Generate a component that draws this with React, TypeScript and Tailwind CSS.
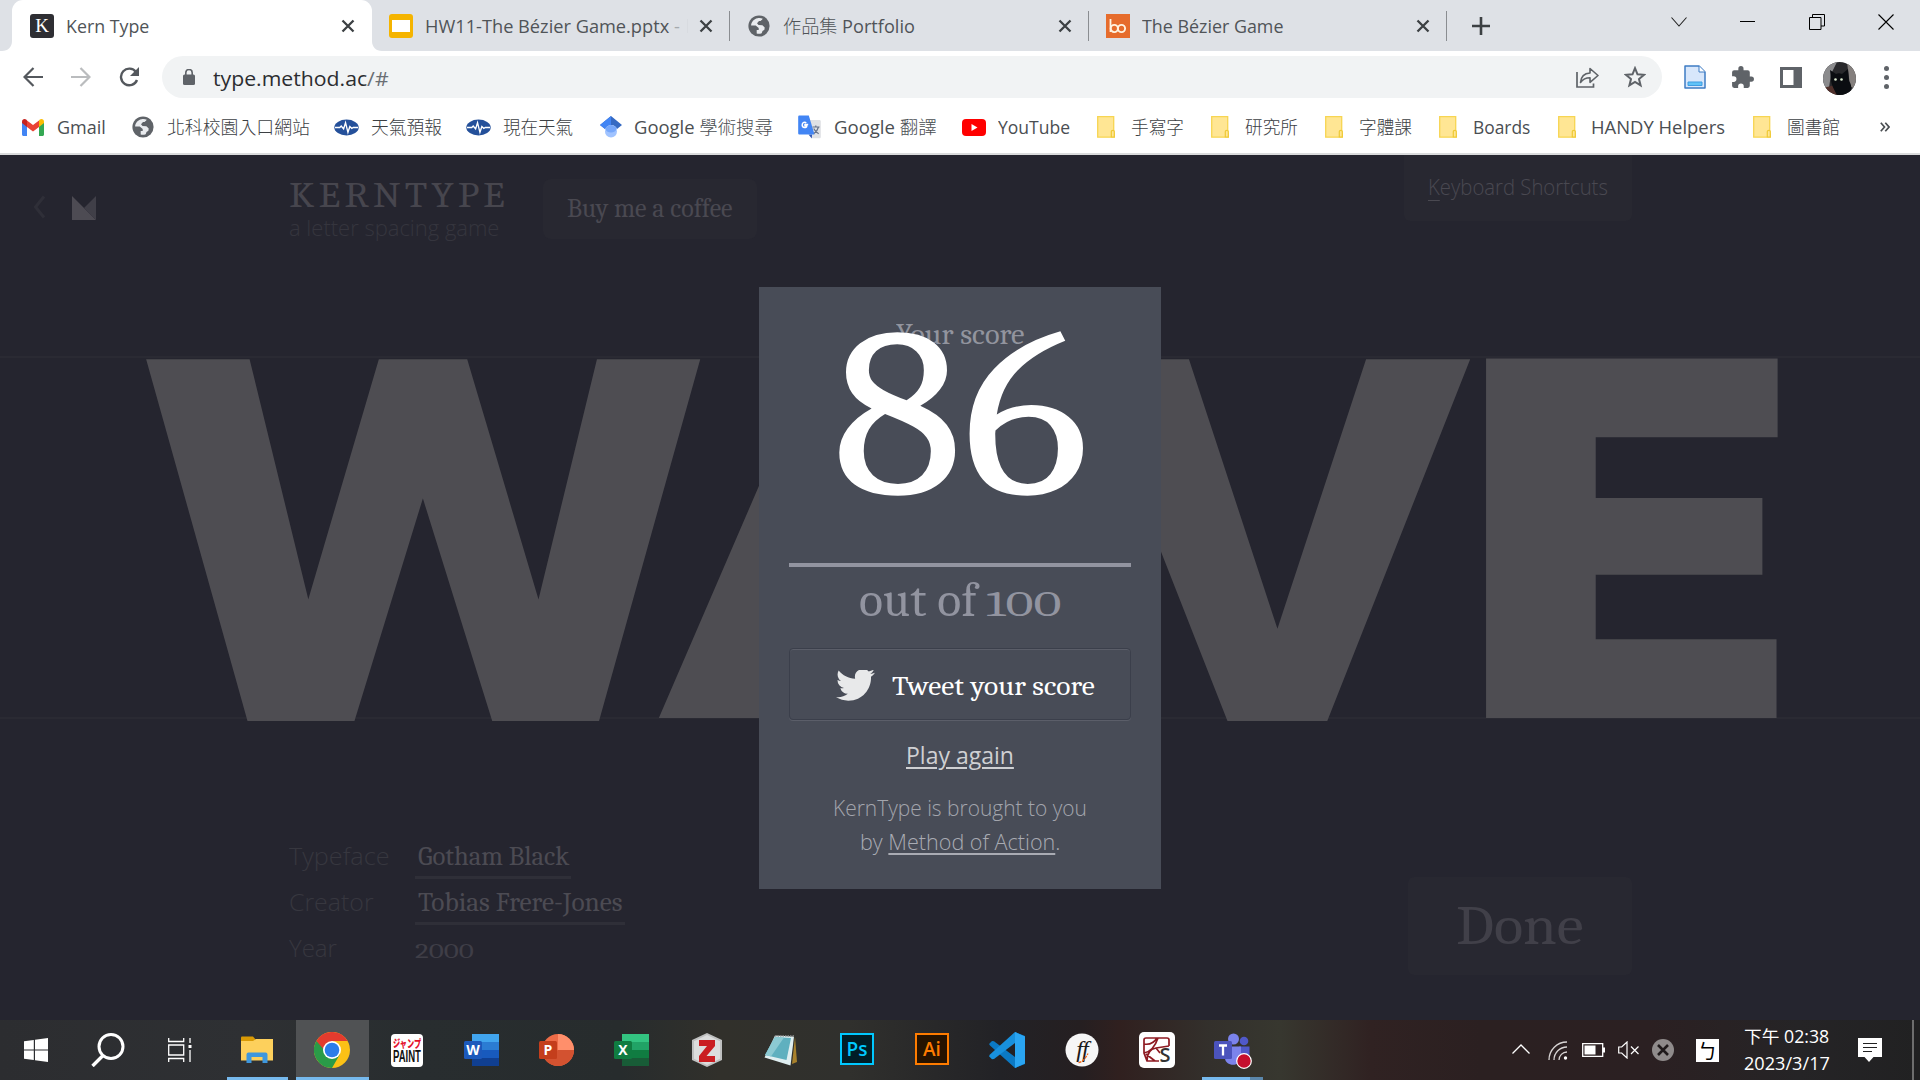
import { useLayoutEffect, useRef } from "react";
import type { ReactNode } from "react";

const UI = "font-['Open_Sans','Noto_Sans_CJK_TC',sans-serif]";
const SERIF = "font-serif";

/** One line of text, stretched horizontally to the width of its box. */
function Fit({ className, children }: { className: string; children: ReactNode }) {
  const box = useRef<HTMLSpanElement>(null);
  const inner = useRef<HTMLSpanElement>(null);
  useLayoutEffect(() => {
    const b = box.current;
    const i = inner.current;
    if (b && i && i.offsetWidth) i.style.transform = `scaleX(${b.clientWidth / i.offsetWidth})`;
  }, []);
  return (
    <span ref={box} className={`block shrink-0 whitespace-nowrap ${className}`}>
      <span ref={inner} className="inline-block origin-left">
        {children}
      </span>
    </span>
  );
}

/* ---------- browser icons ---------- */

function Globe({ className }: { className: string }) {
  return (
    <svg viewBox="0 0 22 22" className={`h-[22px] w-[22px] shrink-0 ${className}`}>
      <circle cx="11" cy="11" r="10.6" fill="#5f6368" />
      <path d="M9.5 3.2c-3.6.7-6.3 3.8-6.4 7.4h4.6l3 2.3v2l-2 .2v3.4c1.500.5 3.400.4 5-.3l.8-2.200 1.900-1.200.3-2.300-2.300-2.300-3.900-.2-1.500-1.700 2-2.200 2.600-.1 1.200-2.300C13.200 3 11.300 2.800 9.500 3.200z" fill="#e9ebee" />
      <path d="M13 5.500l-2.200 2.900 1 1.300h3.500l2.500 2.600 1-1.600c0-3-1.500-5.400-3.500-6.700z" fill="#5f6368" />
    </svg>
  );
}

function Cross({ className }: { className: string }) {
  return (
    <svg viewBox="0 0 14 14" className={`h-[14px] w-[14px] shrink-0 ${className}`}>
      <path d="M1.500 1.500l11 11M12.500 1.500l-11 11" stroke="#3c4043" strokeWidth="2.300" />
    </svg>
  );
}

function Folder({ className }: { className: string }) {
  return (
    <svg viewBox="0 0 18 22" className={`h-[22px] w-[18px] shrink-0 ${className}`}>
      <path d="M.7.7h16v16.500l.8 1v3H.7z" fill="#ffe694" stroke="#f7d552" strokeWidth="1.300" />
      <path d="M14.300 21v-5.500c0-1.500 3-1.500 3 0V21z" fill="#ffe694" stroke="#efc935" strokeWidth="1.200" />
    </svg>
  );
}

function Weather({ className }: { className: string }) {
  return (
    <svg viewBox="0 0 26 17" className={`h-[17px] w-[25px] shrink-0 ${className}`}>
      <ellipse cx="13" cy="8.500" rx="12.700" ry="8.200" fill="#24509a" />
      <path d="M1 8.500h5l1.500-1.500 2.500 3 2-6.500 2.500 10 2-6 2 2 1.500-1H25" fill="none" stroke="#fff" strokeWidth="1.400" />
    </svg>
  );
}

function Gmail({ className }: { className: string }) {
  return (
    <svg viewBox="0 0 22 17" className={`h-[17px] w-[22px] shrink-0 ${className}`}>
      <path d="M0 3v12.500C0 16.300.7 17 1.500 17H5V7z" fill="#4285f4" />
      <path d="M17 7v10h3.500c.8 0 1.500-.7 1.500-1.500V3z" fill="#34a853" />
      <path d="M17 1.500V8l5-4V2.500C22 .3 19.500-.7 17.800.6z" fill="#fbbc04" />
      <path d="M5 8V1.500L11 6l6-4.500V8l-6 4.500z" fill="#ea4335" />
      <path d="M0 2.500V4l5 4V1.500L4.200.6C2.500-.7 0 .3 0 2.500z" fill="#c5221f" />
    </svg>
  );
}

function Scholar({ className }: { className: string }) {
  return (
    <svg viewBox="0 0 22 22" className={`h-[22px] w-[22px] shrink-0 ${className}`}>
      <circle cx="11" cy="15.500" r="6" fill="#a0c3ff" />
      <path d="M11 0L0 9l5 4c1-2.500 3.300-4 6-4s5 1.500 6 4l5-4z" fill="#356ac3" />
      <path d="M11 0L0 9l5 4c1-2.500 3.300-4 6-4z" fill="#4285f4" />
      <path d="M5.200 12.500a6.500 6.500 0 0 1 11.600 0C16 15 14 16.500 11 16.500S6 15 5.200 12.500z" fill="#76a7fa" />
    </svg>
  );
}

function Translate({ className }: { className: string }) {
  return (
    <svg viewBox="0 0 23 24" className={`h-[24px] w-[23px] shrink-0 ${className}`}>
      <path d="M8 5h13.500c.8 0 1.300.6 1.300 1.300V22c0 .7-.5 1.300-1.300 1.300H14z" fill="#dfe1e5" />
      <path d="M14 19.500h-3.500l3.300 4z" fill="#3256b0" />
      <path d="M1.500.5h9.300L16.500 19.500h-15C.7 19.500.2 19 .2 18.200V1.800C.2 1 .7.500 1.500.5z" fill="#4285f4" />
      <path d="M14.500 12h7M17.800 10.500V12M20.500 12c-.8 3-2.500 5-4.500 6.500M15.700 13.500c1 2.200 2.800 4 5 5.200" stroke="#65728a" strokeWidth="1.200" fill="none" />
      <path d="M10.200 9.500H7v1.300h1.800c-.3 2.700-4.600 2.300-4.600-.8 0-2.800 2.700-3.500 4-2" stroke="#fff" strokeWidth="1.500" fill="none" />
    </svg>
  );
}

function YouTube({ className }: { className: string }) {
  return (
    <svg viewBox="0 0 24 17" className={`h-[17px] w-[24px] shrink-0 ${className}`}>
      <rect width="24" height="17" rx="4" fill="#f00" />
      <path d="M9.500 5v7l6-3.500z" fill="#fff" />
    </svg>
  );
}

function Marks() {
  const text = `${UI} text-[18px] leading-[28px] text-[#4a4e52]`;
  const cjk = `${UI} text-[18px] leading-[28px] text-[#3c4043] font-light`;
  return (
    <div className="flex h-[50px] items-center bg-white pb-[2px]">
      <Gmail className="ml-[22px]" />
      <Fit className={`ml-[13px] w-[49px] ${text}`}>Gmail</Fit>
      <Globe className="ml-[26px]" />
      <Fit className={`ml-[13px] w-[143px] ${cjk}`}>北科校園入口網站</Fit>
      <Weather className="ml-[24px]" />
      <Fit className={`ml-[12px] w-[71px] ${cjk}`}>天氣預報</Fit>
      <Weather className="ml-[24px]" />
      <Fit className={`ml-[12px] w-[70px] ${cjk}`}>現在天氣</Fit>
      <Scholar className="ml-[27px]" />
      <Fit className={`ml-[12px] w-[139px] ${text}`}>
        Google <span className="font-light">學術搜尋</span>
      </Fit>
      <Translate className="ml-[25px]" />
      <Fit className={`ml-[13px] w-[103px] ${text}`}>
        Google <span className="font-light">翻譯</span>
      </Fit>
      <YouTube className="ml-[25px]" />
      <Fit className={`ml-[12px] w-[72px] ${text}`}>YouTube</Fit>
      <Folder className="ml-[27px]" />
      <Fit className={`ml-[16px] w-[53px] ${cjk}`}>手寫字</Fit>
      <Folder className="ml-[27px]" />
      <Fit className={`ml-[16px] w-[53px] ${cjk}`}>研究所</Fit>
      <Folder className="ml-[27px]" />
      <Fit className={`ml-[16px] w-[53px] ${cjk}`}>字體課</Fit>
      <Folder className="ml-[27px]" />
      <Fit className={`ml-[16px] w-[57px] ${text}`}>Boards</Fit>
      <Folder className="ml-[28px]" />
      <Fit className={`ml-[15px] w-[134px] ${text}`}>HANDY Helpers</Fit>
      <Folder className="ml-[28px]" />
      <Fit className={`ml-[16px] w-[53px] ${cjk}`}>圖書館</Fit>
      <svg viewBox="0 0 10 10" className="ml-[40px] h-[10px] w-[10px] shrink-0">
        <path d="M.8.8L4.500 5 .8 9.200M5.300.8L9 5 5.300 9.200" fill="none" stroke="#4a4e52" strokeWidth="1.700" />
      </svg>
    </div>
  );
}

function TabStrip() {
  const label = `${UI} text-[18px] leading-[28px] text-[#505458]`;
  return (
    <div className="flex h-[51px] items-center bg-[#dee1e6]">
      <div className="relative ml-[12px] flex h-full w-[360px] shrink-0 items-center rounded-t-[11px] bg-white">
        <svg viewBox="0 0 10 10" className="absolute -left-[10px] bottom-0 h-[10px] w-[10px]">
          <path d="M10 0v10H0C6 10 10 6 10 0z" fill="#fff" />
        </svg>
        <svg viewBox="0 0 10 10" className="absolute -right-[10px] bottom-0 h-[10px] w-[10px]">
          <path d="M0 0v10h10C4 10 0 6 0 0z" fill="#fff" />
        </svg>
        <span className="ml-[18px] flex h-[24px] w-[24px] shrink-0 items-center justify-center rounded-[3px] bg-[#2e2e33] font-['Liberation_Serif',serif] text-[19px] leading-[24px] text-white">
          K
        </span>
        <Fit className={`ml-[12px] w-[83px] ${label}`}>Kern Type</Fit>
        <Cross className="ml-[192px]" />
      </div>
      <span className="ml-[17px] flex h-[24px] w-[24px] shrink-0 items-center justify-center rounded-[3px] bg-[#f5b400]">
        <span className="h-[12px] w-[18px] bg-white" />
      </span>
      <Fit className={`ml-[12px] w-[255px] ${label}`}>
        HW11-The Bézier Game.pptx <span className="text-[#a5a9ad]">-</span>
      </Fit>
      <span className="ml-[7px] h-[14px] w-[1px] shrink-0 bg-[#d8dbe0]" />
      <Cross className="ml-[11px]" />
      <span className="ml-[16px] h-[30px] w-[1px] shrink-0 bg-[#8a8d91]" />
      <Globe className="ml-[18px]" />
      <Fit className={`ml-[13px] w-[132px] ${label}`}>
        <span className="font-light">作品集</span> Portfolio
      </Fit>
      <Cross className="ml-[143px]" />
      <span className="ml-[16px] h-[30px] w-[1px] shrink-0 bg-[#8a8d91]" />
      <svg viewBox="0 0 24 24" className="ml-[17px] h-[24px] w-[24px] shrink-0">
        <path d="M0 0h24v24H0z" fill="#e66c2c" />
        <path d="M4.500 5v13" stroke="#fff3e0" strokeWidth="1.800" />
        <circle cx="8.300" cy="14.500" r="3.600" fill="none" stroke="#fff3e0" strokeWidth="1.900" />
        <circle cx="15.500" cy="14.500" r="3.600" fill="none" stroke="#fff3e0" strokeWidth="1.900" />
      </svg>
      <Fit className={`ml-[12px] w-[141px] ${label}`}>The Bézier Game</Fit>
      <Cross className="ml-[133px]" />
      <span className="ml-[16px] h-[30px] w-[1px] shrink-0 bg-[#8a8d91]" />
      <svg viewBox="0 0 18 18" className="ml-[25px] h-[18px] w-[18px] shrink-0">
        <path d="M9 0v18M0 9h18" stroke="#3c4043" strokeWidth="2.600" />
      </svg>
      <svg viewBox="0 0 16 10" className="mb-[8px] ml-[181px] h-[10px] w-[16px] shrink-0">
        <path d="M.5.5L8 9 15.500.5" fill="none" stroke="#222" strokeWidth="1.100" />
      </svg>
      <span className="mb-[8px] ml-[53px] h-[1px] w-[15px] shrink-0 bg-black" />
      <svg viewBox="0 0 16 16" className="mb-[8px] ml-[54px] h-[16px] w-[16px] shrink-0">
        <path d="M.5 3.500h11.500v12H.5zM3.500 3.500V.5h12v11.500H12" fill="none" stroke="#000" />
      </svg>
      <svg viewBox="0 0 16 16" className="mb-[8px] ml-[53px] h-[16px] w-[16px] shrink-0">
        <path d="M.5.5l15 15M15.500.5l-15 15" stroke="#000" strokeWidth="1.100" />
      </svg>
    </div>
  );
}

function Toolbar() {
  return (
    <div className="flex h-[52px] items-center bg-white">
      <svg viewBox="0 0 20 20" className="ml-[23px] h-[20px] w-[20px] shrink-0">
        <path d="M20 10H2M10.500 1L1.500 10l9 9" fill="none" stroke="#54585d" strokeWidth="2.200" />
      </svg>
      <svg viewBox="0 0 20 20" className="ml-[28px] h-[20px] w-[20px] shrink-0">
        <path d="M0 10h18M9.500 1l9 9-9 9" fill="none" stroke="#babcbe" strokeWidth="2.200" />
      </svg>
      <svg viewBox="0 0 22 20" className="ml-[28px] h-[20px] w-[22px] shrink-0">
        <path d="M17 5A8.300 8.300 0 1 0 18 13" fill="none" stroke="#54585d" strokeWidth="2.400" />
        <path d="M20 0v9h-9z" fill="#54585d" />
      </svg>
      <div className="ml-[21px] flex h-[42px] w-[1500px] shrink-0 items-center rounded-full bg-[#f1f3f4]">
        <svg viewBox="0 0 12 16" className="ml-[21px] h-[16px] w-[12px] shrink-0">
          <rect y="5.500" width="12" height="10.500" rx="1.500" fill="#5f6368" />
          <path d="M2.800 6V3.700a3.200 3.200 0 0 1 6.400 0V6" fill="none" stroke="#5f6368" strokeWidth="1.600" />
        </svg>
        <Fit className={`${UI} ml-[18px] mt-[2px] w-[176px] text-[20.500px] leading-[30px] text-[#2c2d30]`}>
          type.method.ac<span className="text-[#6a6e73]">/#</span>
        </Fit>
        <svg viewBox="0 0 23 21" className="ml-[1187px] h-[21px] w-[23px] shrink-0">
          <path d="M1 5v15h16.500v-3.500" fill="none" stroke="#5f6368" strokeWidth="1.700" />
          <path d="M4.500 15.500C5 9.500 9 6.300 14 6V1.500l8 7-8 6.800v-4.500c-4 0-7 1.300-9.500 4.700z" fill="none" stroke="#5f6368" strokeWidth="1.600" strokeLinejoin="round" />
        </svg>
        <svg viewBox="0 0 22 22" className="ml-[25px] h-[22px] w-[22px] shrink-0">
          <path d="M11 2.200l2.500 6.100 6.500.5-5 4.200 1.600 6.400L11 16l-5.600 3.400L7 13 2 8.800l6.500-.5z" fill="none" stroke="#5f6368" strokeWidth="2" />
        </svg>
      </div>
      <svg viewBox="0 0 22 24" className="ml-[22px] h-[24px] w-[22px] shrink-0">
        <path d="M1 1h14l6 6v16H1z" fill="#d8e7fb" stroke="#3e7cc4" strokeWidth="1.500" strokeLinejoin="round" />
        <path d="M15 1v6h6" fill="#fff" stroke="#3e7cc4" />
        <path d="M4 17h14v3.500H4z" fill="#5fc3f8" stroke="#3f9be0" />
      </svg>
      <svg viewBox="0 0 24 24" className="ml-[24px] h-[25px] w-[25px] shrink-0">
        <path d="M20.500 11H19V7a2 2 0 0 0-2-2h-4V3.500a2.500 2.500 0 0 0-5 0V5H4a2 2 0 0 0-2 2v3.800h1.500a2.700 2.700 0 0 1 0 5.400H2V20a2 2 0 0 0 2 2h3.800v-1.500a2.700 2.700 0 0 1 5.400 0V22H17a2 2 0 0 0 2-2v-4h1.500a2.500 2.500 0 0 0 0-5z" fill="#5f6368" />
      </svg>
      <svg viewBox="0 0 22 21" className="ml-[25px] h-[21px] w-[22px] shrink-0">
        <path d="M0 0h22v21H0z" fill="#5f6368" />
        <path d="M3 3h10.500v15H3z" fill="#fff" />
      </svg>
      <svg viewBox="0 0 33 33" className="ml-[21px] mt-[2px] h-[33px] w-[33px] shrink-0 overflow-hidden rounded-full">
        <path d="M0 0h33v33H0z" fill="#29292c" />
        <path d="M0 0h14L8 12 6 26 0 28z" fill="#8b8b8d" />
        <path d="M24 0h9v28l-6-4z" fill="#85807e" />
        <path d="M0 26l12-3 4 10H0z" fill="#50302b" />
        <path d="M7 8l6 4c2-1 4-1 6 0l6-5 1 12c4 5 2 12-2 14H14C12 29 8 23 8 17z" fill="#0b0d11" />
        <circle cx="12.500" cy="17.500" r="1.300" fill="#dcebd0" />
        <circle cx="18.500" cy="17.500" r="1.300" fill="#dcebd0" />
      </svg>
      <span className="ml-[28px] flex flex-col gap-[4px]">
        <span className="h-[5px] w-[5px] rounded-full bg-[#5f6368]" />
        <span className="h-[5px] w-[5px] rounded-full bg-[#5f6368]" />
        <span className="h-[5px] w-[5px] rounded-full bg-[#5f6368]" />
      </span>
    </div>
  );
}

/* ---------- game page ---------- */

function Header() {
  return (
    <div className="flex h-[110px] items-start">
      <svg viewBox="0 0 12 24" className="ml-[33px] mt-[40px] h-[24px] w-[12px] shrink-0">
        <path d="M11 1.500L2.500 12 11 22.500" fill="none" stroke="#2f2f38" strokeWidth="3" />
      </svg>
      <svg viewBox="0 0 24 24" className="ml-[27px] mt-[41px] h-[24px] w-[24px] shrink-0">
        <path d="M0 0l12 12L24 24H0z" fill="#4d4b53" />
        <path d="M24 0v24L12 12z" fill="#403f48" />
      </svg>
      <div className="ml-[193px] mt-[18px] w-[217px] shrink-0">
        <Fit className={`${SERIF} w-[220px] text-[36px] leading-[45px] tracking-[3.500px] text-[#47464e]`}>KERNTYPE</Fit>
        <Fit className="-mt-[6px] w-[210px] font-['Open_Sans',sans-serif] text-[22.500px] font-light leading-[32px] text-[#35353e]">
          a letter spacing game
        </Fit>
      </div>
      <div className="ml-[37px] mt-[24px] flex h-[60px] w-[214px] shrink-0 justify-center rounded-[8px] bg-[#282831]">
        <Fit className={`${SERIF} w-[166px] text-[26px] leading-[60px] text-[#4a4951]`}>Buy me a coffee</Fit>
      </div>
      <div className="ml-[647px] flex h-[66px] w-[228px] shrink-0 justify-center rounded-b-[6px] bg-[#282831]">
        <Fit className="w-[180px] font-['Open_Sans',sans-serif] text-[22px] font-light leading-[63px] text-[#4a4951]">
          <span className="underline decoration-1 underline-offset-[5px]">K</span>eyboard Shortcuts
        </Fit>
      </div>
    </div>
  );
}

function Board() {
  const letter = "absolute font-['Roboto',sans-serif] text-[#4e4d52]";
  return (
    <div className="relative h-[363px] border-y-[2px] border-[#2a2a33]">
      <Fit className={`${letter} -top-[65px] left-[137px] w-[573px] text-[509px] font-extrabold leading-[508px]`}>W</Fit>
      <Fit className={`${letter} -top-[66px] left-[660px] w-[405px] text-[506px] font-black leading-[508px]`}>A</Fit>
      <Fit className={`${letter} -top-[65px] left-[1085px] w-[386px] text-[509px] font-extrabold leading-[508px]`}>V</Fit>
      <Fit className="absolute -top-[67px] left-[1460px] w-[341px] font-['Inter',sans-serif] text-[494px] font-black leading-[494px] text-[#4e4d52]">
        E
      </Fit>
    </div>
  );
}

function Details() {
  const name = "font-['Open_Sans',sans-serif] text-[24px] font-light leading-[46px] text-[#37373f]";
  const value = "mt-[1px] font-serif text-[26px] leading-[46px] text-[#4c4b53]";
  return (
    <div className="ml-[289px] mt-[114px] flex w-[1343px] items-start justify-between">
      <div className="grid grid-cols-[126px_auto]">
        <Fit className={`${name} w-[101px]`}>Typeface</Fit>
        <div className="flex h-[46px] w-[156px] justify-center border-b-[3px] border-[#2f2f38]">
          <Fit className={`${value} w-[151px]`}>Gotham Black</Fit>
        </div>
        <Fit className={`${name} w-[85px]`}>Creator</Fit>
        <div className="flex h-[46px] w-[210px] justify-center border-b-[3px] border-[#2f2f38]">
          <Fit className={`${value} w-[205px]`}>Tobias Frere-Jones</Fit>
        </div>
        <Fit className={`${name} w-[48px]`}>Year</Fit>
        <Fit className="mt-[2px] w-[58px] font-serif text-[21px] leading-[48px] text-[#3f3e47]">2000</Fit>
      </div>
      <div className="mt-[44px] flex h-[98px] w-[224px] justify-center rounded-[6px] bg-[#282831]">
        <Fit className={`${SERIF} w-[128px] text-[54px] leading-[99px] text-[#414049]`}>Done</Fit>
      </div>
    </div>
  );
}

function ScoreCard() {
  return (
    <div className="absolute left-[759px] top-[132px] flex h-[602px] w-[402px] flex-col items-center bg-[#484c57]">
      <Fit className={`${SERIF} mt-[30px] w-[128px] text-[28.500px] leading-[36px] text-[#92949e]`}>Your score</Fit>
      <Fit className={`${SERIF} relative -mt-[35px] w-[257px] text-[241px] leading-[196px] text-white`}>86</Fit>
      <div className="mt-[49px] h-[4px] w-[342px] shrink-0 bg-[#9294a0]" />
      <div className={`${SERIF} mt-[5px] flex h-[57px] items-baseline text-[#9294a0]`}>
        <Fit className="w-[118px] text-[49px] leading-[57px]">out of</Fit>
        <Fit className="ml-[9px] w-[75px] text-[36px] leading-[57px]">100</Fit>
      </div>
      <div className="mt-[19px] flex h-[72px] w-[342px] shrink-0 items-center rounded-[4px] border border-[#3b3f4b] pt-[3px] shadow-[inset_0_1px_0_#5b5e69,0_1px_0_#5b5e69]">
        <svg viewBox="0 3 24 19.500" className="ml-[46px] h-[32px] w-[39px] shrink-0">
          <path
            d="M23.950 4.570a10 10 0 0 1-2.820.77 4.960 4.960 0 0 0 2.160-2.720c-.95.56-2 .96-3.130 1.190a4.920 4.920 0 0 0-8.380 4.480C7.690 8.090 4.070 6.130 1.640 3.160a4.820 4.820 0 0 0-.67 2.480c0 1.710.87 3.210 2.190 4.100a4.900 4.900 0 0 1-2.230-.62v.06a4.920 4.920 0 0 0 3.950 4.830 5 5 0 0 1-2.210.08 4.940 4.940 0 0 0 4.600 3.420A9.870 9.870 0 0 1 0 19.540a13.940 13.940 0 0 0 7.550 2.210c9.050 0 14-7.500 14-13.990 0-.21 0-.42-.02-.63a9.940 9.940 0 0 0 2.460-2.550z"
            fill="#e8e9ea"
          />
        </svg>
        <Fit className={`${SERIF} ml-[17px] w-[203px] text-[28px] leading-[40px] text-white`}>Tweet your score</Fit>
      </div>
      <Fit className="mt-[18px] w-[108px] font-['Open_Sans',sans-serif] text-[23px] leading-[35px] text-[#cfd0d3]">
        <span className="underline decoration-2 underline-offset-[3px]">Play again</span>
      </Fit>
      <Fit className="mt-[17px] w-[254px] font-['Open_Sans',sans-serif] text-[22px] font-light leading-[34px] text-[#a3a5ad]">
        KernType is brought to you
      </Fit>
      <Fit className="w-[200px] font-['Open_Sans',sans-serif] text-[22px] font-light leading-[34px] text-[#a9abb3]">
        by <span className="underline decoration-2 underline-offset-[3px]">Method of Action</span>.
      </Fit>
    </div>
  );
}

/* ---------- taskbar ---------- */

function Office({ letter, tone, className }: { letter: string; tone: [string, string, string, string, string]; className: string }) {
  const round = letter === "P";
  return (
    <svg viewBox="0 0 36 34" className={`h-[34px] w-[36px] shrink-0 ${className}`}>
      {round ? (
        <g>
          <circle cx="19" cy="17" r="16" fill={tone[1]} />
          <path d="M19 1a16 16 0 0 1 16 16H19z" fill={tone[0]} />
          <path d="M35 17a16 16 0 0 1-30 7.700L19 17z" fill={tone[2]} />
        </g>
      ) : (
        <g>
          <rect x="8" y="1" width="27" height="32" rx="1.500" fill={tone[1]} />
          <path d="M8 1h27v8H8z" fill={tone[0]} />
          <path d="M8 17h27v8H8z" fill={tone[2]} />
          <path d="M8 25h27v8H8z" fill={tone[3]} />
        </g>
      )}
      <rect x="0" y="8" width="18" height="18" rx="1.500" fill={tone[4]} />
      <text x="9" y="22" textAnchor="middle" fontSize="14" fontWeight="700" fill="#fff" fontFamily="Open Sans, sans-serif">
        {letter}
      </text>
    </svg>
  );
}

function Taskbar() {
  return (
    <div className="flex h-[60px] items-center bg-[linear-gradient(90deg,#2c2d30_0px,#2e3033_250px,#282d2f_420px,#272c2d_620px,#31302b_720px,#30302d_850px,#222226_1000px,#251f21_1080px,#30201f_1120px,#33302c_1210px,#37372f_1280px,#302222_1370px,#2b2021_1480px,#2b2022_1650px,#252426_1800px,#212122_1920px)]">
      <svg viewBox="0 0 24 24" className="ml-[24px] h-[24px] w-[24px] shrink-0">
        <path d="M0 3.300L9.800 2v9.500H0zM11 1.800L24 0v11.500H11zM0 12.500h9.800V22L0 20.700zM11 12.500h13V24l-13-1.800z" fill="#fff" />
      </svg>
      <svg viewBox="0 0 34 34" className="ml-[43px] h-[34px] w-[34px] shrink-0">
        <circle cx="20" cy="13.500" r="12" fill="none" stroke="#fff" strokeWidth="3" />
        <path d="M12 22.500L1.500 33" stroke="#fff" strokeWidth="3.400" />
      </svg>
      <svg viewBox="0 0 24 24" className="ml-[43px] h-[24px] w-[24px] shrink-0">
        <path d="M.7 0v3.500h15V0M.7 7h15v10h-15zM.7 24v-3.500h15V24M22 0v5M22 12v12" fill="none" stroke="#fff" strokeWidth="1.300" />
        <path d="M20.500 7h3v3h-3z" fill="#fff" />
      </svg>
      <div className="ml-[35px] flex h-full w-[61px] shrink-0 flex-col items-center border-b-[3px] border-[#76b9ed]">
        <svg viewBox="0 0 32 27" className="mt-[16px] mr-[2px] h-[27px] w-[32px]">
          <path d="M0 1.500Q0 .5 1 .5h11l3 3.500-3 3H0z" fill="#d99a05" />
          <path d="M0 5h12l3-2h17v21.500H0z" fill="#fdd05c" />
          <path d="M5.500 27V18.500q0-2 2-2h17q2 0 2 2V27h-5v-6h-11v6z" fill="#3e97dd" />
        </svg>
      </div>
      <div className="ml-[8px] flex h-full w-[73px] shrink-0 flex-col items-center border-b-[3px] border-[#76b9ed] bg-[#505254]">
        <svg viewBox="0 0 36 36" className="mt-[12px] mr-[2px] h-[36px] w-[36px]">
          <circle cx="18" cy="18" r="18" fill="#fbc116" />
          <path d="M18 18L2.400 9A18 18 0 0 0 18 36l7.800-13.500z" fill="#2a9b48" />
          <path d="M18 18h-7.800L2.400 9A18 18 0 0 1 33.600 9H18z" fill="#e33b2e" />
          <circle cx="18" cy="18" r="9" fill="#fff" />
          <circle cx="18" cy="18" r="7.300" fill="#2b7de9" />
        </svg>
      </div>
      <div className="ml-[22px] flex h-[33px] w-[32px] shrink-0 flex-col items-center overflow-hidden rounded-[4px] bg-white">
        <Fit className="mt-[4px] w-[28px] font-['Noto_Sans_CJK_JP',sans-serif] text-[11px] font-black leading-[11px] text-[#e4112c]">ジャンプ</Fit>
        <Fit className="w-[28px] font-['Liberation_Sans',sans-serif] text-[16px] font-bold leading-[15px] text-[#111]">PAINT</Fit>
      </div>
      <Office className="ml-[41px]" letter="W" tone={["#41a5ee", "#2b7cd3", "#185abd", "#103f91", "#1c59bb"]} />
      <Office className="ml-[39px]" letter="P" tone={["#ff8f6b", "#ed6c47", "#d35230", "#d35230", "#c43e1c"]} />
      <Office className="ml-[39px]" letter="X" tone={["#33c481", "#21a366", "#107c41", "#185c37", "#107c41"]} />
      <svg viewBox="0 0 30 34" className="ml-[42px] h-[34px] w-[30px] shrink-0">
        <path d="M15 0l15 7v20l-15 7L0 27V7z" fill="#bfc0c0" />
        <path d="M15 2l13 6.200v17.600L15 32 2 25.800V8.200z" fill="#dcdddd" />
        <path d="M7 7h16v6l-8.500 10H23v6H7v-6l8-10H7z" fill="#ca1e22" />
      </svg>
      <svg viewBox="0 0 34 32" className="ml-[42px] h-[32px] w-[34px] shrink-0">
        <path d="M31 3l2 25-5 2z" fill="#a8812c" />
        <path d="M11 1.500l19 1-3.500 29L.5 23.500z" fill="#dfeef0" />
        <path d="M11 3l16 1-4.500 22L1 21z" fill="#5fb0bf" />
        <path d="M11 3l9 .6L7 22.500 1 21z" fill="#8ccad3" />
        <path d="M11 1.800h19" stroke="#777" strokeWidth="1.600" strokeDasharray="1.500 1" />
      </svg>
      <span className="mb-[3px] ml-[42px] flex h-[32px] w-[34px] shrink-0 items-center justify-center border-2 border-[#00c8ff] bg-[#001d26] font-['Open_Sans',sans-serif] text-[19px] font-semibold leading-[28px] text-[#00c8ff]">
        Ps
      </span>
      <span className="mb-[3px] ml-[41px] flex h-[32px] w-[34px] shrink-0 items-center justify-center border-2 border-[#ff7c00] bg-[#261300] font-['Open_Sans',sans-serif] text-[19px] font-semibold leading-[28px] text-[#ff7c00]">
        Ai
      </span>
      <svg viewBox="0 0 36 36" className="ml-[40px] h-[36px] w-[36px] shrink-0">
        <path d="M26 0l10 4v28l-10 4L1 13.500l-1-1.500 3-3 2 .3L26 25z" fill="#0b79c4" />
        <path d="M26 11L5 27l-2 .2-3-3L1 22.500 26 0z" fill="#1890dd" />
        <path d="M26 0l10 4.500v27L26 36z" fill="#2aa5f2" />
      </svg>
      <svg viewBox="0 0 34 34" className="ml-[40px] h-[34px] w-[34px] shrink-0">
        <circle cx="17" cy="17" r="16.500" fill="#f6f6f6" />
        <text x="17" y="24" textAnchor="middle" fontSize="24" fontStyle="italic" fill="#1a1a1a" fontFamily="Liberation Serif, serif" letterSpacing="-1">
          ff
        </text>
        <path d="M13.500 29.500c4-.5 7-4 9.500-9" fill="none" stroke="#f36b1c" strokeWidth="1.300" strokeDasharray="3 1" />
      </svg>
      <svg viewBox="0 0 36 36" className="ml-[40px] h-[36px] w-[36px] shrink-0">
        <rect width="36" height="36" rx="5" fill="#fff" />
        <path d="M20 29H8L5 21V8q0-2 2-2h21q2 0 2 2v6M5 12c6 1 10-1 13-6M5 21c6-1 11-6 14-15M8 29c0-7 3-12 9-13l13-2M7 22l9 7M17 16l4 5" fill="none" stroke="#8e1a22" strokeWidth="1.700" />
        <text x="26" y="30" textAnchor="middle" fontSize="20" fontWeight="600" fill="#333" fontFamily="Open Sans, sans-serif">
          S
        </text>
      </svg>
      <div className="ml-[27px] flex h-full w-[48px] shrink-0 flex-col border-b-[3px] border-[#76b9ed]">
        <svg viewBox="0 0 38 36" className="ml-[12px] mt-[13px] h-[36px] w-[38px]">
          <circle cx="19.500" cy="6" r="5.500" fill="#7b83eb" />
          <circle cx="30" cy="8" r="4.300" fill="#5059c9" />
          <path d="M25 13.500h10.500V25c0 3-3 5-6 5h-4.500z" fill="#5059c9" />
          <path d="M11 13.500h16V25c0 9-16 9-16 0z" fill="#7b83eb" />
          <rect y="8" width="18" height="18" rx="1.500" fill="#4b53bc" />
          <path d="M5 12.500h8M9 12.500v10" stroke="#fff" strokeWidth="2.300" />
          <circle cx="30" cy="28" r="7.300" fill="#c50f2e" stroke="#fff" strokeWidth="1.200" />
        </svg>
      </div>
      <div className="h-full w-[13px] shrink-0 border-b-[3px] border-[#5b87ab]" />
      <svg viewBox="0 0 18 10" className="mt-[-2px] ml-[249px] h-[10px] w-[18px] shrink-0">
        <path d="M.5 9.500L9 1l8.500 8.500" fill="none" stroke="#fff" strokeWidth="1.300" />
      </svg>
      <svg viewBox="0 0 20 20" className="ml-[18px] h-[20px] w-[20px] shrink-0">
        <path d="M1 20A18 18 0 0 1 19 2M6 20A13 13 0 0 1 19 7M11 20a8 8 0 0 1 8-8" fill="none" stroke="#d8d4d4" strokeWidth="1.300" />
        <circle cx="17.500" cy="18" r="1.700" fill="#fff" />
      </svg>
      <svg viewBox="0 0 23 14" className="ml-[14px] h-[14px] w-[23px] shrink-0">
        <path d="M.7.7h20v12.600h-20z" fill="none" stroke="#fff" strokeWidth="1.300" />
        <path d="M2.500 2.500h11v9h-11zM21 4.500h2v5h-2z" fill="#fff" />
      </svg>
      <svg viewBox="0 0 22 18" className="ml-[13px] h-[18px] w-[22px] shrink-0">
        <path d="M.7 6h3L9 1v16l-5.300-5h-3zM13 5.500l7.500 7.500M20.500 5.500L13 13" fill="none" stroke="#fff" strokeWidth="1.200" />
      </svg>
      <svg viewBox="0 0 24 24" className="ml-[11px] h-[24px] w-[24px] shrink-0">
        <circle cx="12" cy="12" r="11" fill="#8f8b8b" />
        <path d="M7 7l10 10M17 7L7 17" stroke="#1f1a1b" strokeWidth="2.600" />
      </svg>
      <span className="ml-[21px] flex h-[23px] w-[23px] shrink-0 items-center justify-center bg-white font-['Noto_Sans_CJK_TC',sans-serif] text-[20px] leading-[23px] text-black">ㄅ</span>
      <div className="ml-[25px] shrink-0">
        <Fit className={`${UI} w-[85px] text-[17.500px] leading-[27px] text-white`}>下午 02:38</Fit>
        <Fit className={`${UI} w-[86px] text-[17.500px] leading-[27px] text-white`}>2023/3/17</Fit>
      </div>
      <svg viewBox="0 0 24 24" className="ml-[28px] h-[24px] w-[24px] shrink-0">
        <path d="M0 0h24v19h-8.500L11 24l-4.500-5H0z" fill="#fff" />
        <path d="M5 5.500h14M5 9.500h14M5 13.500h9" stroke="#222" strokeWidth="1.200" />
      </svg>
      <span className="ml-[30px] h-full w-[2px] shrink-0 bg-[#6e6e6e]" />
    </div>
  );
}

export default function App() {
  return (
    <div className="flex h-[1080px] w-[1920px] flex-col overflow-hidden bg-[#25252f]">
      <TabStrip />
      <Toolbar />
      <Marks />
      <div className="h-[2px] bg-[#dadbdc]" />
      <div className="relative h-[865px] overflow-hidden bg-[#25252f]">
        <Header />
        <div className="h-[91px]" />
        <Board />
        <Details />
        <ScoreCard />
      </div>
      <Taskbar />
    </div>
  );
}
